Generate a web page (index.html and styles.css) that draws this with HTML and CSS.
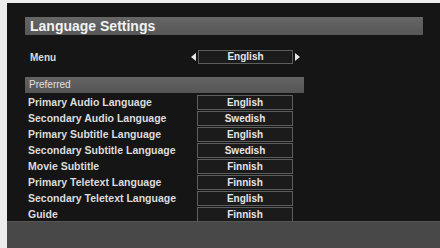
FILE: index.html
```html
<html>
<head>
<link rel="stylesheet" href="styles.css">
</head>
<body>
    <div class="screen">
        <div class="panel">
            <div class="title">Language Settings</div>
            <div class="menu-row">
                <span class="label">Menu</span>
                <div class="selector">
                    <span class="arrow arrow-left"></span>
                    <span class="value">English</span>
                    <span class="arrow arrow-right"></span>
                </div>
            </div>
            <div class="section">Preferred</div>
            <div class="list">
                <div class="row"><span class="label">Primary Audio Language</span><span class="value">English</span></div>
                <div class="row"><span class="label">Secondary Audio Language</span><span class="value">Swedish</span></div>
                <div class="row"><span class="label">Primary Subtitle Language</span><span class="value">English</span></div>
                <div class="row"><span class="label">Secondary Subtitle Language</span><span class="value">Swedish</span></div>
                <div class="row"><span class="label">Movie Subtitle</span><span class="value">Finnish</span></div>
                <div class="row"><span class="label">Primary Teletext Language</span><span class="value">Finnish</span></div>
                <div class="row"><span class="label">Secondary Teletext Language</span><span class="value">English</span></div>
                <div class="row"><span class="label">Guide</span><span class="value">Finnish</span></div>
            </div>
        </div>
        <div class="footer"></div>
    </div>
</body>
</html>
```
FILE: styles.css
```css
* {
    box-sizing: border-box;
}

body {
    margin: 0;
    background: #ededed;
    font-family: "Liberation Sans", Arial, sans-serif;
    font-weight: bold;
    color: #dcdcdc;
}

.screen {
    margin: 3px 0 0 7px;
    height: 245px;
    display: flex;
    flex-direction: column;
    background: #151515;
}

.panel {
    height: 218px;
    padding: 14px 17px 0 18px;
    display: flex;
    flex-direction: column;
}

.title {
    height: 18px;
    padding-left: 5px;
    background: linear-gradient(#666, #565656);
    color: #f2f2f2;
    font-size: 14px;
    line-height: 18px;
}

.menu-row {
    margin-top: 15px;
    height: 14px;
    display: flex;
    align-items: center;
    font-size: 10px;
}

.menu-row .label {
    width: 166px;
    padding-left: 5px;
}

.selector {
    display: flex;
    align-items: center;
}

.arrow {
    width: 0;
    height: 0;
    border-top: 4px solid transparent;
    border-bottom: 4px solid transparent;
}

.arrow-left {
    border-right: 5px solid #e6e6e6;
    margin-right: 2px;
}

.arrow-right {
    border-left: 5px solid #e6e6e6;
    margin-left: 2px;
}

.value {
    display: block;
    width: 95px;
    height: 14px;
    border: 1px solid #5e5e5e;
    background: #1b1b1b;
    color: #e6e6e6;
    text-align: center;
    font-size: 10px;
    line-height: 12px;
}

.section {
    margin-top: 13px;
    width: 279px;
    height: 16px;
    padding-left: 4px;
    background: linear-gradient(#636363, #555);
    color: #e0e0e0;
    font-size: 10px;
    line-height: 16px;
    font-weight: normal;
}

.list {
    margin-top: 1px;
    width: 279px;
    display: flex;
    flex-direction: column;
}

.row {
    height: 16px;
    display: flex;
    align-items: center;
    font-size: 10.5px;
}

.row .label {
    width: 172px;
    padding-left: 3px;
}

.row .value {
    width: 96px;
    height: 15px;
    line-height: 13px;
}

.footer {
    flex: 1;
    background: #484848;
    border-top: 1px solid #555;
}
```
